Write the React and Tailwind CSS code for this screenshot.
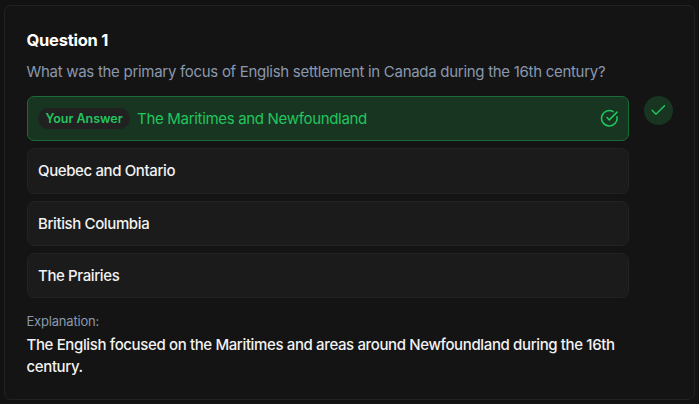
import { Check, CircleCheckBig } from "lucide-react";

const question = {
  number: 1,
  text: "What was the primary focus of English settlement in Canada during the 16th century?",
  options: [
    "The Maritimes and Newfoundland",
    "Quebec and Ontario",
    "British Columbia",
    "The Prairies",
  ],
  answer: 0,
  selected: 0,
  explanation:
    "The English focused on the Maritimes and areas around Newfoundland during the 16th century.",
};

export default function App() {
  return (
    <div className="h-screen overflow-hidden bg-[#121212] px-1 pt-[5px] font-[Inter,sans-serif] text-[#f2f2f2]">
      <section className="h-[395px] rounded-[7px] border border-[#222222] bg-[#141414] pt-[23px] pr-[21px] pl-[22px]">
        <h2 className="-ml-[0.5px] text-[16.5px] leading-[22px] font-bold tracking-[-0.25px] text-white">
          Question {question.number}
        </h2>
        <p className="mt-[9px] -ml-[0.5px] text-[15px] leading-[23px] tracking-[-0.29px] text-[#8a98ad]">
          {question.text}
        </p>

        <div className="mt-[13px] flex items-start gap-[15px]">
          <div className="flex w-[602px] flex-col gap-[7.2px]">
            {question.options.map((option, index) => (
              <Option
                key={option}
                label={option}
                correct={index === question.answer}
                selected={index === question.selected}
              />
            ))}
          </div>
          <div className="flex size-[29px] items-center justify-center rounded-full bg-[#183522] text-[#22c55e]">
            <Check size={18.6} strokeWidth={1.9} />
          </div>
        </div>

        {/* Explanation */}
        <div className="mt-[13px] -ml-[0.5px] w-[602px]">
          <p className="text-[13px] leading-[20px] tracking-[-0.2px] text-[#8a98ad]">Explanation:</p>
          <p className="mt-[3px] text-[15px] leading-[22px] font-medium tracking-[-0.37px]">
            {question.explanation}
          </p>
        </div>
      </section>
    </div>
  );
}

/* --- Components --- */

function Option({ label, correct, selected }) {
  if (correct) {
    return (
      <div className="flex h-[45.2px] items-center rounded-[7px] border border-[#1a6b38] bg-[#183522] px-2.5 text-[15px] tracking-[-0.32px] text-[#22c55e]">
        {selected && (
          <span className="mr-[7px] rounded-full bg-[#212121] px-[7.5px] text-[12.5px] leading-[21px] font-semibold tracking-[-0.02px]">
            Your Answer
          </span>
        )}
        <span className="pt-px">{label}</span>
        <CircleCheckBig size={18.6} className="-mr-px ml-auto" />
      </div>
    );
  }

  return (
    <div className="flex h-[45.2px] items-center rounded-[7px] border border-[#222222] bg-[#1b1b1b] px-2.5 pt-px text-[15px] font-medium tracking-[-0.38px]">
      {label}
    </div>
  );
}
